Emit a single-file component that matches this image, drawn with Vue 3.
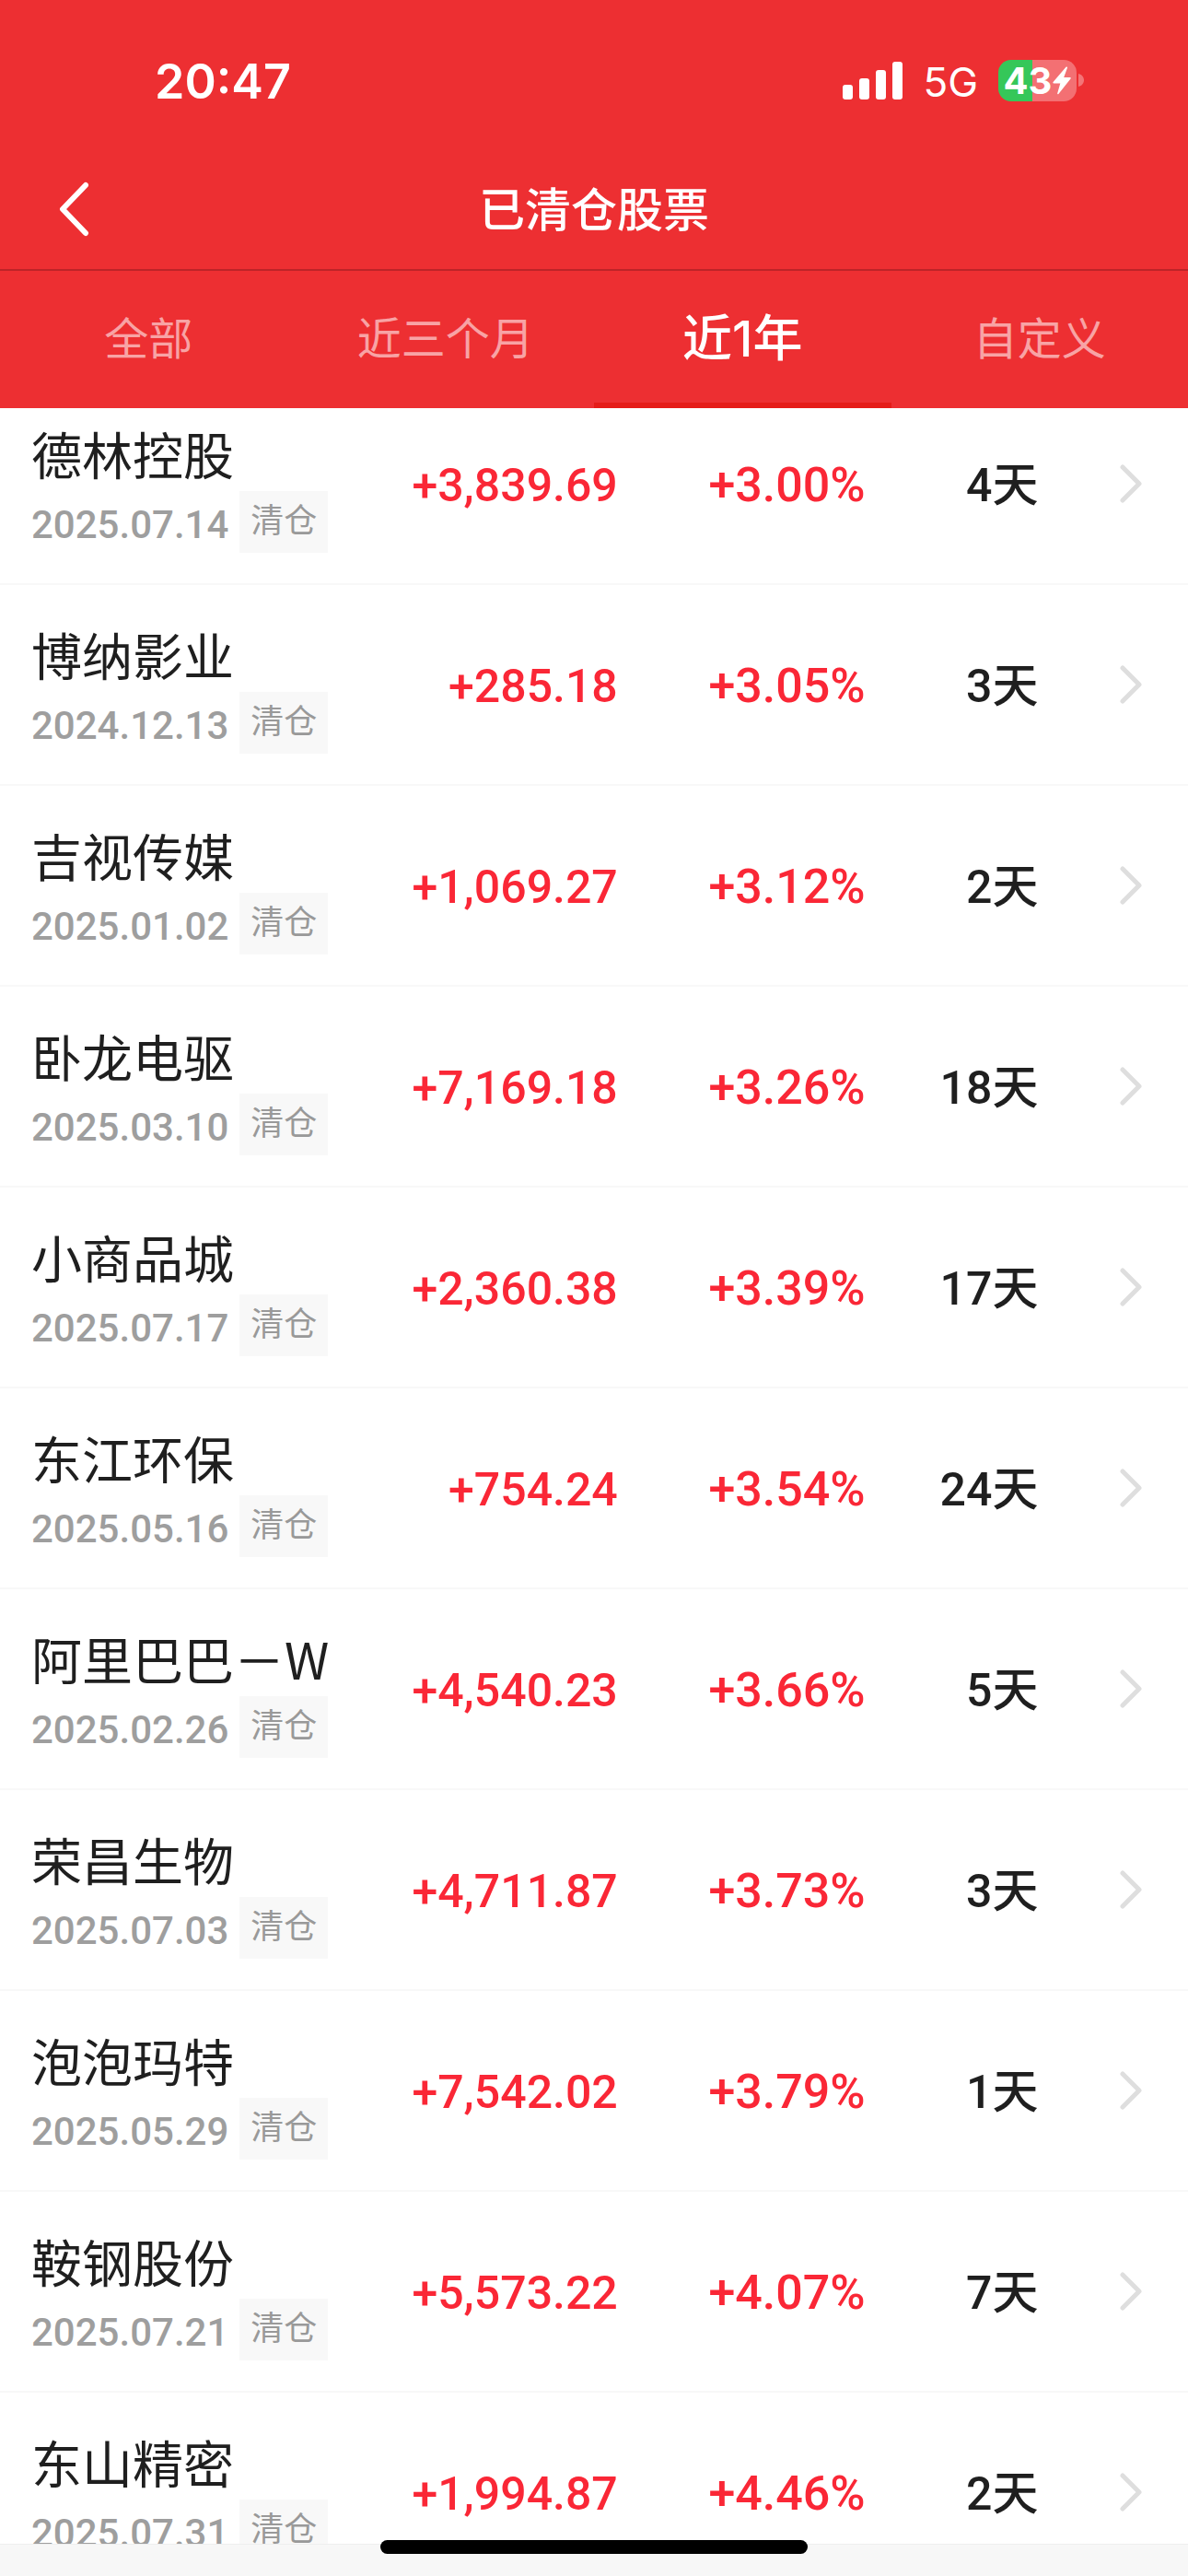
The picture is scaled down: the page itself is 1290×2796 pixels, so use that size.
<script setup>
import { ref } from 'vue'

const tabs = ['全部', '近三个月', '近1年', '自定义']
const active = ref(2)

const stocks = [
  { name: '德林控股', date: '2025.07.14', profit: '+3,839.69', rate: '+3.00%', days: 4 },
  { name: '博纳影业', date: '2024.12.13', profit: '+285.18', rate: '+3.05%', days: 3 },
  { name: '吉视传媒', date: '2025.01.02', profit: '+1,069.27', rate: '+3.12%', days: 2 },
  { name: '卧龙电驱', date: '2025.03.10', profit: '+7,169.18', rate: '+3.26%', days: 18 },
  { name: '小商品城', date: '2025.07.17', profit: '+2,360.38', rate: '+3.39%', days: 17 },
  { name: '东江环保', date: '2025.05.16', profit: '+754.24', rate: '+3.54%', days: 24 },
  { name: '阿里巴巴－W', date: '2025.02.26', profit: '+4,540.23', rate: '+3.66%', days: 5 },
  { name: '荣昌生物', date: '2025.07.03', profit: '+4,711.87', rate: '+3.73%', days: 3 },
  { name: '泡泡玛特', date: '2025.05.29', profit: '+7,542.02', rate: '+3.79%', days: 1 },
  { name: '鞍钢股份', date: '2025.07.21', profit: '+5,573.22', rate: '+4.07%', days: 7 },
  { name: '东山精密', date: '2025.07.31', profit: '+1,994.87', rate: '+4.46%', days: 2 },
]
</script>

<template>
  <div class="screen">
    <header class="header">
      <div class="status">
        <time class="clock">20:47</time>
        <div class="signals">
          <svg class="bars" width="65" height="41" viewBox="0 0 65 41" fill="#fff" aria-hidden="true">
            <rect x="0" y="25" width="11" height="16" rx="3" />
            <rect x="18" y="18" width="11" height="23" rx="3" />
            <rect x="36" y="9" width="11" height="32" rx="3" />
            <rect x="54" y="0" width="11" height="41" rx="3" />
          </svg>
          <span class="network">5G</span>
          <div class="battery">
            <div class="cell">
              <span class="level">43</span>
              <svg width="20" height="31" viewBox="0 0 20 31" fill="#fff" aria-hidden="true">
                <path d="M14.5 .8 .6 17c-.6.8-.3 1.5.7 1.5h7L5.200 29.200c-.3 1.100.7 1.500 1.400.6L19.500 13.500c.6-.8.3-1.500-.7-1.500h-6.600L16 1.500c.3-1-.8-1.500-1.500-.7z" />
              </svg>
            </div>
            <svg width="6" height="14" viewBox="0 0 6 14" aria-hidden="true">
              <path d="M0 0c8 2 8 12 0 14z" fill="#f37577" />
            </svg>
          </div>
        </div>
      </div>
      <nav class="navbar">
        <button class="back" type="button" aria-label="返回">
          <svg width="34" height="60" viewBox="0 0 34 60" fill="none" stroke="#fff" stroke-width="6" stroke-linecap="round" stroke-linejoin="round">
            <path d="M29 4 4 30l25 26" />
          </svg>
        </button>
        <h1 class="title">已清仓股票</h1>
      </nav>
      <div class="tabs" role="tablist">
        <button
          v-for="(tab, i) in tabs"
          :key="tab"
          class="tab"
          :class="{ active: i === active }"
          type="button"
          role="tab"
          :aria-selected="i === active"
          @click="active = i"
        >{{ tab }}</button>
      </div>
    </header>

    <main class="list">
      <table class="stocks">
        <colgroup>
          <col class="col-name" />
          <col class="col-profit" />
          <col class="col-rate" />
          <col class="col-days" />
          <col />
        </colgroup>
        <tbody>
          <tr v-for="s in stocks" :key="s.name">
            <td>
              <div class="stock">
                <span class="name">{{ s.name }}</span>
                <div class="meta">
                  <span class="date">{{ s.date }}</span>
                  <span class="tag">清仓</span>
                </div>
              </div>
            </td>
            <td class="num up">{{ s.profit }}</td>
            <td class="num rate up">{{ s.rate }}</td>
            <td class="num">{{ s.days }}天</td>
            <td>
              <a class="more" href="#" :aria-label="s.name">
                <svg width="24" height="42" viewBox="0 0 24 42" fill="none" stroke="#dedede" stroke-width="5" stroke-linecap="round" stroke-linejoin="round">
                  <path d="M3 3l18 18L3 39" />
                </svg>
              </a>
            </td>
          </tr>
        </tbody>
      </table>
    </main>

    <footer class="footer">
      <div class="home"></div>
    </footer>
  </div>
</template>

<style>
body {
  margin: 0;
  background: #fff;
}
</style>

<style scoped>
.screen {
  display: flex;
  flex-direction: column;
  height: 100vh;
  overflow: hidden;
  background: #fff;
  color: #1f1f1f;
  font-family: Roboto, "Noto Sans CJK SC", sans-serif;
}

button {
  padding: 0;
  border: 0;
  background: none;
  color: inherit;
  font: inherit;
}

.header {
  flex: none;
  background: #ed2f32;
  color: #fff;
}

.status {
  display: flex;
  align-items: center;
  justify-content: space-between;
  box-sizing: border-box;
  height: 162px;
  padding: 12px 113px 0 168px;
  font-family: Inter, sans-serif;
}

.clock {
  padding-top: 2px;
  font-size: 52px;
  font-weight: 600;
}

.signals {
  display: flex;
  align-items: center;
}

.network {
  margin: 4px 22px 0;
  font-size: 44px;
}

.battery {
  display: flex;
  align-items: center;
  gap: 2px;
}

.cell {
  display: flex;
  align-items: center;
  justify-content: center;
  gap: 1px;
  width: 85px;
  height: 45px;
  border-radius: 14px;
  background: linear-gradient(90deg, #35c759 44%, #f37073 44%);
}

.level {
  font-size: 40px;
  font-weight: 700;
  line-height: 45px;
}

.navbar {
  display: grid;
  grid-template-columns: 1fr auto 1fr;
  align-items: center;
  height: 130px;
  border-bottom: 2px solid #bd2428;
}

.back {
  display: flex;
  justify-self: start;
  padding-left: 64px;
}

.title {
  margin: 0;
  padding-bottom: 6px;
  font-size: 50px;
  font-weight: 500;
}

.tabs {
  display: flex;
  height: 149px;
}

.tab {
  flex: 1;
  padding-bottom: 4px;
  border-bottom: 6px solid transparent;
  color: #f8a3a5;
  font-size: 48px;
}

.tab.active {
  border-bottom-color: #e51c19;
  color: #fff;
  font-family: Inter, "Noto Sans CJK SC", sans-serif;
  font-size: 54px;
  font-weight: 500;
}

.list {
  flex: 1;
  min-height: 0;
  overflow: hidden;
}

/* The list is scrolled slightly under the header */
.stocks {
  width: 100%;
  margin-top: -26px;
  border-spacing: 0;
  table-layout: fixed;
}

.col-name {
  width: 31%;
}

.col-profit {
  width: 21%;
}

.col-rate {
  width: 21%;
}

.col-days {
  width: 14.4%;
}

td {
  box-sizing: border-box;
  height: 218px;
  padding: 0;
  border-bottom: 2px solid #f8f8f8;
  white-space: nowrap;
}

.stock {
  padding: 5px 0 0 34px;
}

.name {
  display: block;
  font-family: "Noto Sans CJK SC", sans-serif;
  font-size: 55px;
  line-height: 72px;
}

.meta {
  display: flex;
  align-items: center;
  gap: 12px;
  padding-top: 6px;
}

.date {
  padding-top: 6px;
  color: #9e9e9e;
  font-size: 42px;
  font-weight: 500;
}

.tag {
  padding: 0 12px;
  background: #f8f8f8;
  color: #999;
  font-size: 36px;
  line-height: 67px;
}

.num {
  padding-top: 4px;
  text-align: right;
  font-size: 50px;
  font-weight: 500;
  line-height: 60px;
}

.rate {
  padding-right: 2px;
  font-size: 52px;
}

.up {
  color: #fa2736;
}

.more {
  display: flex;
  justify-content: flex-end;
  padding-right: 50px;
}

.footer {
  display: flex;
  flex: none;
  justify-content: center;
  height: 34px;
  border-top: 1px solid #eee;
  background: #f7f7f7;
}

.home {
  width: 36%;
  height: 15px;
  margin-top: -5px;
  border-radius: 8px;
  background: #000;
}
</style>
